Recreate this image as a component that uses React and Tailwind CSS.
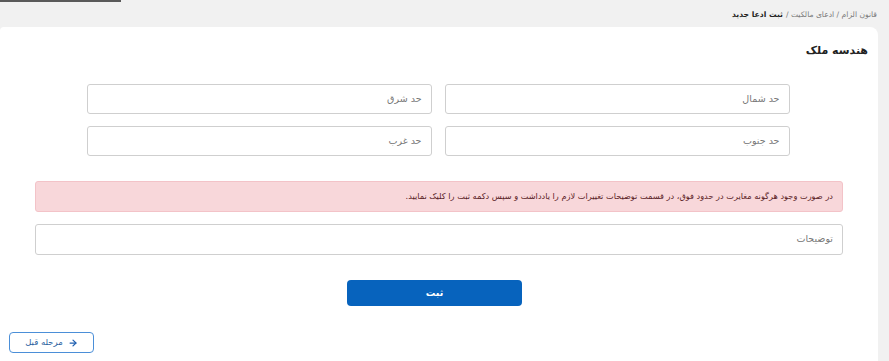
import React from 'react';

const fa = { fontFamily: '"DejaVu Sans", "Noto Sans", sans-serif' };

function Field({ label }) {
  return (
    <div className="h-[30px] border border-[#cfcfcf] rounded-[3px] bg-white flex items-center px-[9px] text-[9.5px] text-[#777]">
      {label}
    </div>
  );
}

function App() {
  return (
    <div className="min-h-screen w-[889px] h-[361px] overflow-hidden bg-[#f1f1f1] flex flex-col" style={fa}>
      {/* نوار بالای صفحه */}
      <div className="h-[2px] w-[121px] bg-[#5a5a5a] shrink-0" />

      {/* مسیر صفحه */}
      <div dir="rtl" className="h-[25px] flex items-center pr-[12px] text-[7.6px] text-[#7a7a7a]">
        <span>قانون الزام / ادعای مالکیت / </span>
        <span className="font-bold text-[#222] mr-[3px]">ثبت ادعا جدید</span>
      </div>

      {/* کارت اصلی */}
      <div dir="rtl" className="flex-1 mr-[11px] bg-white rounded-t-lg rounded-tl-[4px] flex flex-col">
        <h2 className="pr-[10px] pt-[17px] text-[11px] font-bold text-[#222] leading-[14px]">هندسه ملک</h2>

        <div className="w-[703px] mx-auto mt-[26px] grid grid-cols-2 gap-x-[13px] gap-y-[12px] -translate-x-px">
          <Field label="حد شمال" />
          <Field label="حد شرق" />
          <Field label="حد جنوب" />
          <Field label="حد غرب" />
        </div>

        <div className="w-[808px] mx-auto mt-[25px] h-[31px] bg-[#f8d7da] border border-[#f3c3c8] rounded-[3px] flex items-center px-[9px] text-[8.2px] text-[#5a2226]">
          در صورت وجود هرگونه مغایرت در حدود فوق، در قسمت توضیحات تغییرات لازم را یادداشت و سپس دکمه ثبت را کلیک نمایید.
        </div>

        <div className="w-[808px] mx-auto mt-[12px] h-[31px] border border-[#cfcfcf] rounded-[3px] flex items-center px-[9px] text-[9.5px] text-[#777]">
          توضیحات
        </div>

        <div className="flex justify-center pr-[9px] mt-[25px]">
          <button className="w-[175px] h-[26px] bg-[#0763bd] rounded-[4px] text-white text-[9.5px] font-bold">ثبت</button>
        </div>

        <div className="flex justify-end pl-[9px] mt-[26px]">
          <button className="w-[85px] h-[21px] border-[1.5px] border-[#4b8fd8] rounded-[4px] flex items-center justify-center gap-[5px] text-[8.5px] text-[#2a5f9e]">
            <svg width="10" height="10" viewBox="0 0 24 24" fill="none" stroke="#1f5fb0" strokeWidth="3" strokeLinecap="round" strokeLinejoin="round">
              <path d="M5 12h14" />
              <path d="M12 5l7 7-7 7" />
            </svg>
            <span>مرحله قبل</span>
          </button>
        </div>
      </div>
    </div>
  );
}

export default App;
